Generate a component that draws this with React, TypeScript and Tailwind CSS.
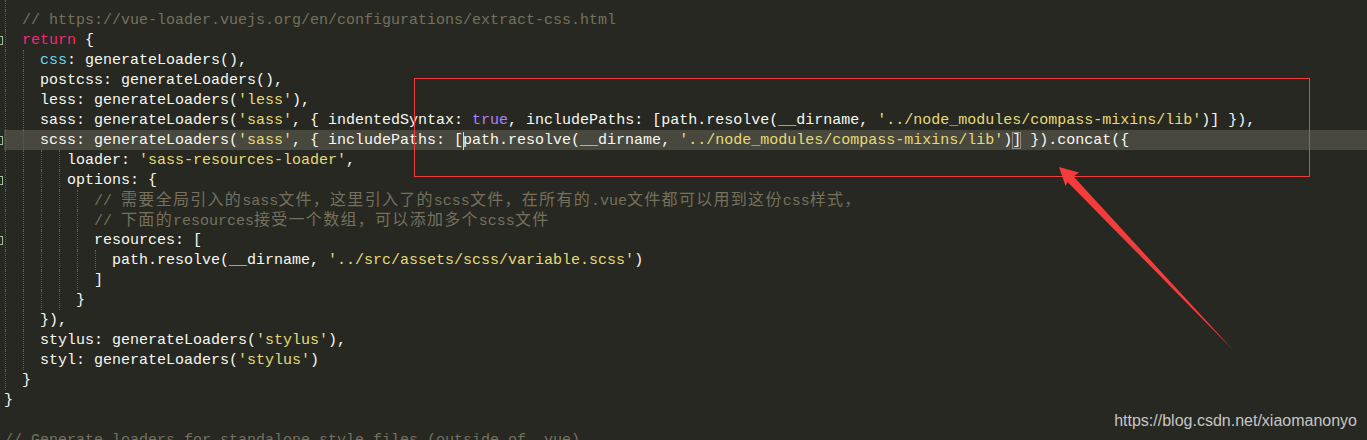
import React from "react";

type Tok = [string, string];

const W = "text-[#f8f8f2]";
const C = "text-[#75715e]";
const S = "text-[#e6db74]";
const K = "text-[#f92672]";
const B = "text-[#66d9ef]";
const P = "text-[#ae81ff]";

// guide column -> left offset inside the code area
const guideLeft: Record<number, string> = {
  0: "left-[1px]",
  2: "left-[19px]",
  4: "left-[37px]",
  6: "left-[55px]",
  8: "left-[73px]",
  10: "left-[91px]",
};

type Line = {
  toks: Tok[];
  guides: number[];
  marker?: boolean;
  active?: boolean;
};

const lines: Line[] = [
  { toks: [["  // https://vue-loader.vuejs.org/en/configurations/extract-css.html", C]], guides: [0] },
  { toks: [["  ", W], ["return", K], [" {", W]], guides: [0], marker: true },
  { toks: [["    ", W], ["css", B], [": generateLoaders(),", W]], guides: [0, 2] },
  { toks: [["    postcss: generateLoaders(),", W]], guides: [0, 2] },
  { toks: [["    less: generateLoaders(", W], ["'less'", S], ["),", W]], guides: [0, 2] },
  {
    toks: [
      ["    sass: generateLoaders(", W],
      ["'sass'", S],
      [", { indentedSyntax: ", W],
      ["true", P],
      [", includePaths: [path.resolve(__dirname, ", W],
      ["'../node_modules/compass-mixins/lib'", S],
      [")] }),", W],
    ],
    guides: [0, 2],
  },
  {
    toks: [
      ["    scss: generateLoaders(", W],
      ["'sass'", S],
      [", { includePaths: [", W],
      ["CURSOR", ""],
      ["path.resolve(__dirname, ", W],
      ["'../node_modules/compass-mixins/lib'", S],
      [")", W],
      ["MATCH", ""],
      [" }).concat({", W],
    ],
    guides: [0, 2],
    marker: true,
    active: true,
  },
  { toks: [["       loader: ", W], ["'sass-resources-loader'", S], [",", W]], guides: [0, 2, 4, 6] },
  { toks: [["       options: {", W]], guides: [0, 2, 4, 6], marker: true },
  {
    toks: [["          // 需要全局引入的sass文件，这里引入了的scss文件，在所有的.vue文件都可以用到这份css样式，", C]],
    guides: [0, 2, 4, 6, 8],
  },
  { toks: [["          // 下面的resources接受一个数组，可以添加多个scss文件", C]], guides: [0, 2, 4, 6, 8] },
  { toks: [["          resources: [", W]], guides: [0, 2, 4, 6, 8], marker: true },
  {
    toks: [["            path.resolve(__dirname, ", W], ["'../src/assets/scss/variable.scss'", S], [")", W]],
    guides: [0, 2, 4, 6, 8, 10],
  },
  { toks: [["          ]", W]], guides: [0, 2, 4, 6, 8] },
  { toks: [["        }", W]], guides: [0, 2, 4, 6] },
  { toks: [["    }),", W]], guides: [0, 2] },
  { toks: [["    stylus: generateLoaders(", W], ["'stylus'", S], ["),", W]], guides: [0, 2] },
  { toks: [["    styl: generateLoaders(", W], ["'stylus'", S], [")", W]], guides: [0, 2] },
  { toks: [["  }", W]], guides: [0] },
  { toks: [["}", W]], guides: [] },
  { toks: [["", W]], guides: [] },
  { toks: [["// Generate loaders for standalone style files (outside of .vue)", C]], guides: [] },
];

const cjk = /([\u3000-\u9fff\uff00-\uffef]+)/;

const renderText = (text: string) =>
  text.split(cjk).map((part, i) =>
    cjk.test(part) ? (
      <span key={i} className="text-[16px] tracking-[1.3px]">
        {part}
      </span>
    ) : (
      <React.Fragment key={i}>{part}</React.Fragment>
    )
  );

const Guide = ({ col }: { col: number }) => (
  <span
    className={`absolute top-0 h-full border-l border-dotted border-[#5e5e54] ${guideLeft[col]}`}
  />
);

const CodeLine = ({ line }: { line: Line }) => (
  <div className="flex h-[20px]">
    <div className="relative w-[4px] shrink-0">
      {line.marker && (
        <span className="absolute left-0 top-[6px] h-[9px] w-[3px] border border-l-0 border-[#9ec09a]" />
      )}
    </div>
    <div
      className={`relative flex-1 whitespace-pre pt-[1px] leading-[20px] ${line.active ? "bg-[#49483e]" : ""}`}
    >
      {line.guides.map((g) => (
        <Guide key={g} col={g} />
      ))}
      {line.toks.map(([text, cls], i) => {
        if (text === "CURSOR")
          return (
            <span key={i} className="relative">
              <span className="absolute left-0 top-[0px] h-[18px] w-[1px] bg-[#d6d0ea]" />
            </span>
          );
        if (text === "MATCH")
          return (
            <span key={i} className={`${W} outline outline-[#8e8e86] -outline-offset-1`}>
              ]
            </span>
          );
        return (
          <span key={i} className={`relative ${cls}`}>
            {renderText(text)}
          </span>
        );
      })}
    </div>
  </div>
);

export default function App() {
  return (
    <div className="relative h-[440px] w-[1367px] overflow-hidden bg-[#272822] font-['Liberation_Mono','Noto_Sans_CJK_SC',monospace] text-[15px]">
      <div className="flex h-[10px]">
        <div className="w-[4px]" />
        <div className="relative flex-1">
          <Guide col={0} />
        </div>
      </div>
      {lines.map((l, i) => (
        <CodeLine key={i} line={l} />
      ))}

      {/* annotation box */}
      <div className="absolute left-[414px] top-[78px] h-[99px] w-[896px] border border-[#f23b3b]" />

      {/* annotation arrow */}
      <svg className="pointer-events-none absolute left-0 top-0" width="1367" height="440">
        <polygon
          points="1059,167 1079,172.5 1073.5,176.5 1234,351 1067.5,182 1065.5,186"
          fill="#f43c3c"
        />
      </svg>

      <div className="absolute right-[10px] top-[411px] font-['Liberation_Sans',Arial,sans-serif] text-[16px] leading-[20px] text-[#c6c6c6]">
        https://blog.csdn.net/xiaomanonyo
      </div>
    </div>
  );
}
